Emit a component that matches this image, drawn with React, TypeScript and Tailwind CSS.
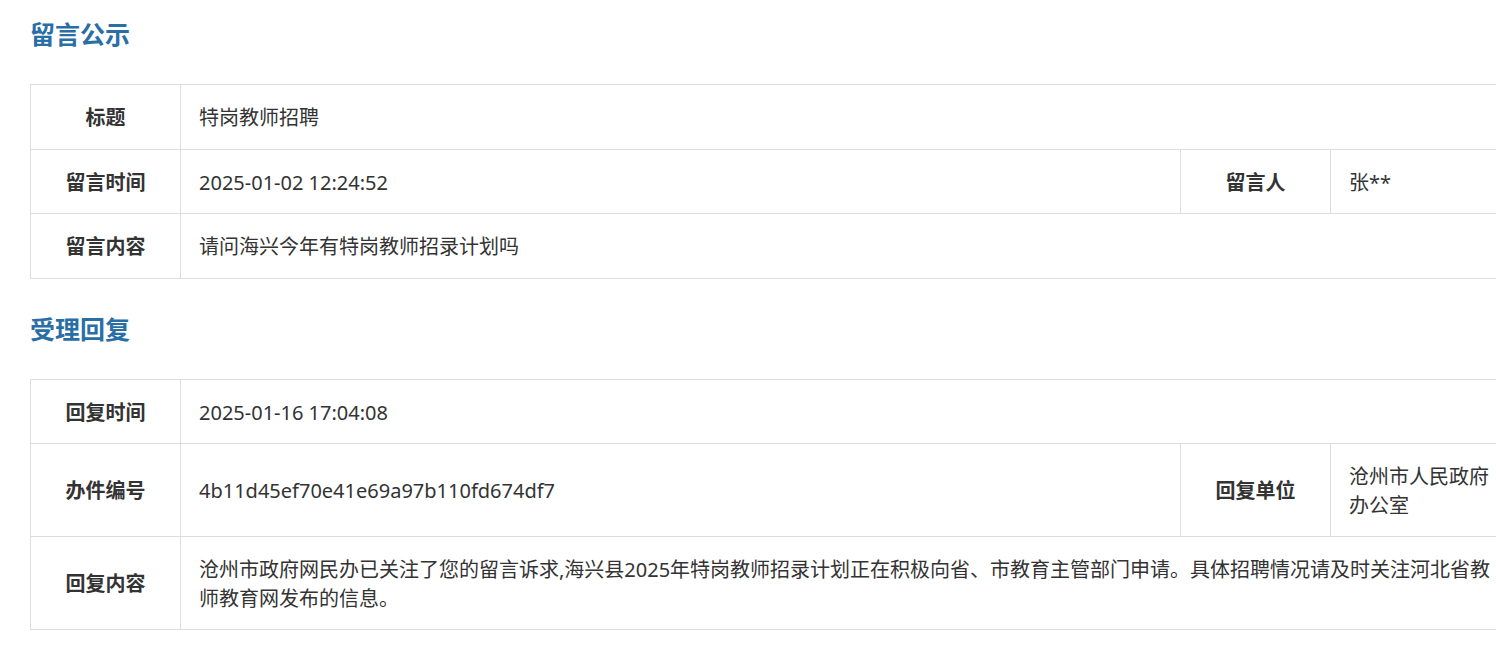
import React from "react";

const font = {
  fontFamily: '"Noto Sans", "Noto Sans CJK SC", sans-serif',
};

function Label({ children }: { children: React.ReactNode }) {
  return (
    <td className="w-[150px] border border-[#dddddd] pt-[19px] pb-[16px] text-center align-middle font-bold text-[#333333]">
      {children}
    </td>
  );
}

function Value({
  children,
  colSpan,
  className = "",
}: {
  children: React.ReactNode;
  colSpan?: number;
  className?: string;
}) {
  return (
    <td
      colSpan={colSpan}
      className={`border border-[#dddddd] pt-[19px] pb-[16px] pl-[18px] pr-[18px] align-middle text-[#333333] ${className}`}
    >
      {children}
    </td>
  );
}

function Heading({ children }: { children: React.ReactNode }) {
  return (
    <h2 className="h-[40px] text-[25px] font-bold leading-[38px] text-[#2a6ea6]">
      {children}
    </h2>
  );
}

export default function App() {
  return (
    <div className="w-full overflow-hidden bg-white" style={font}>
      <div className="w-[1560px] pl-[30px] pt-[15px] pb-[21px] text-[20px] leading-[28.5px]">
        <Heading>留言公示</Heading>
        <table className="mt-[29px] w-[1495px] table-fixed border-collapse">
          <colgroup>
            <col className="w-[150px]" />
            <col className="w-[1000px]" />
            <col className="w-[150px]" />
            <col className="w-[195px]" />
          </colgroup>
          <tbody>
            <tr>
              <Label>标题</Label>
              <Value colSpan={3}>特岗教师招聘</Value>
            </tr>
            <tr>
              <Label>留言时间</Label>
              <Value>2025-01-02 12:24:52</Value>
              <Label>留言人</Label>
              <Value>张**</Value>
            </tr>
            <tr>
              <Label>留言内容</Label>
              <Value colSpan={3}>请问海兴今年有特岗教师招录计划吗</Value>
            </tr>
          </tbody>
        </table>

        <div className="mt-[31px]">
          <Heading>受理回复</Heading>
        </div>
        <table className="mt-[29px] w-[1495px] table-fixed border-collapse">
          <colgroup>
            <col className="w-[150px]" />
            <col className="w-[1000px]" />
            <col className="w-[150px]" />
            <col className="w-[195px]" />
          </colgroup>
          <tbody>
            <tr>
              <Label>回复时间</Label>
              <Value colSpan={3}>2025-01-16 17:04:08</Value>
            </tr>
            <tr>
              <Label>办件编号</Label>
              <Value>4b11d45ef70e41e69a97b110fd674df7</Value>
              <Label>回复单位</Label>
              <Value>沧州市人民政府办公室</Value>
            </tr>
            <tr>
              <Label>回复内容</Label>
              <Value colSpan={3}>
                沧州市政府网民办已关注了您的留言诉求,海兴县2025年特岗教师招录计划正在积极向省、市教育主管部门申请。具体招聘情况请及时关注河北省教师教育网发布的信息。
              </Value>
            </tr>
          </tbody>
        </table>
      </div>
    </div>
  );
}
